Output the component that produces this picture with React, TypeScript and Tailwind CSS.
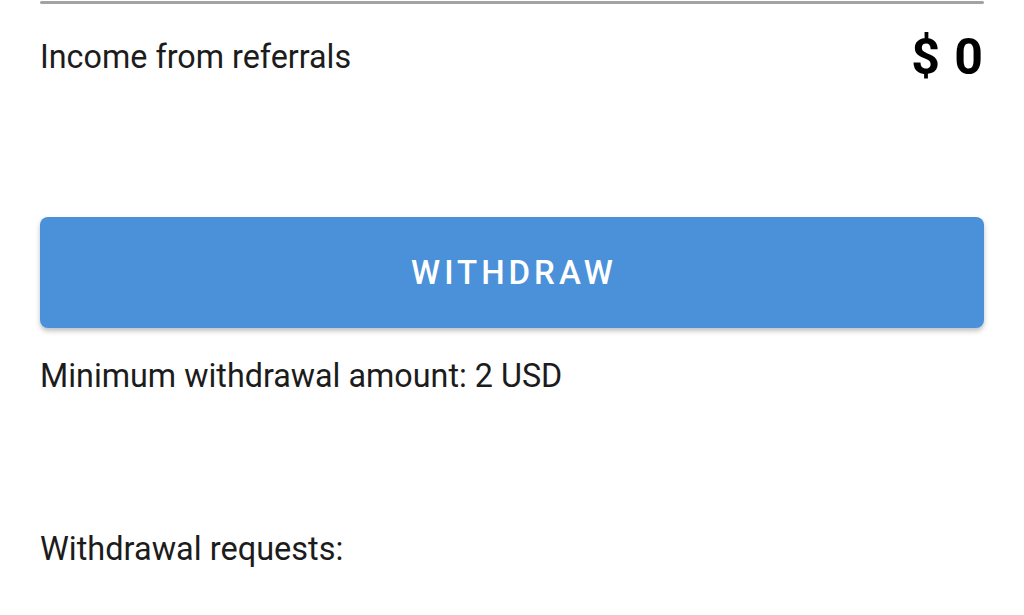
export default function App() {
  return (
    <div
      className="w-[1024px] h-[615px] overflow-hidden bg-white px-[40px] text-[#1c1c1c]"
      style={{ fontFamily: 'Roboto, "Liberation Sans", sans-serif' }}
    >
      <div className="pt-[1px]">
        <div className="h-[3px] bg-[#a3a3a3] rounded-full" />
      </div>
      <div className="mt-[28px] flex h-[50px] items-center justify-between">
        <span className="text-[32.3px] leading-[40px]">Income from referrals</span>
        <span className="text-[50px] font-bold leading-[50px] tracking-[1px] text-black">$ 0</span>
      </div>
      <button className="mt-[135px] flex h-[111px] w-full items-center justify-center rounded-[8px] bg-[#4a91d9] pl-[4px] text-[33px] font-medium tracking-[4px] text-white shadow-[0_3px_5px_rgba(0,0,0,0.25)]">
        WITHDRAW
      </button>
      <div className="mt-[28px] text-[32.3px] leading-[40px]">Minimum withdrawal amount: 2 USD</div>
      <div className="mt-[133px] text-[32.5px] leading-[40px]">Withdrawal requests:</div>
    </div>
  );
}
